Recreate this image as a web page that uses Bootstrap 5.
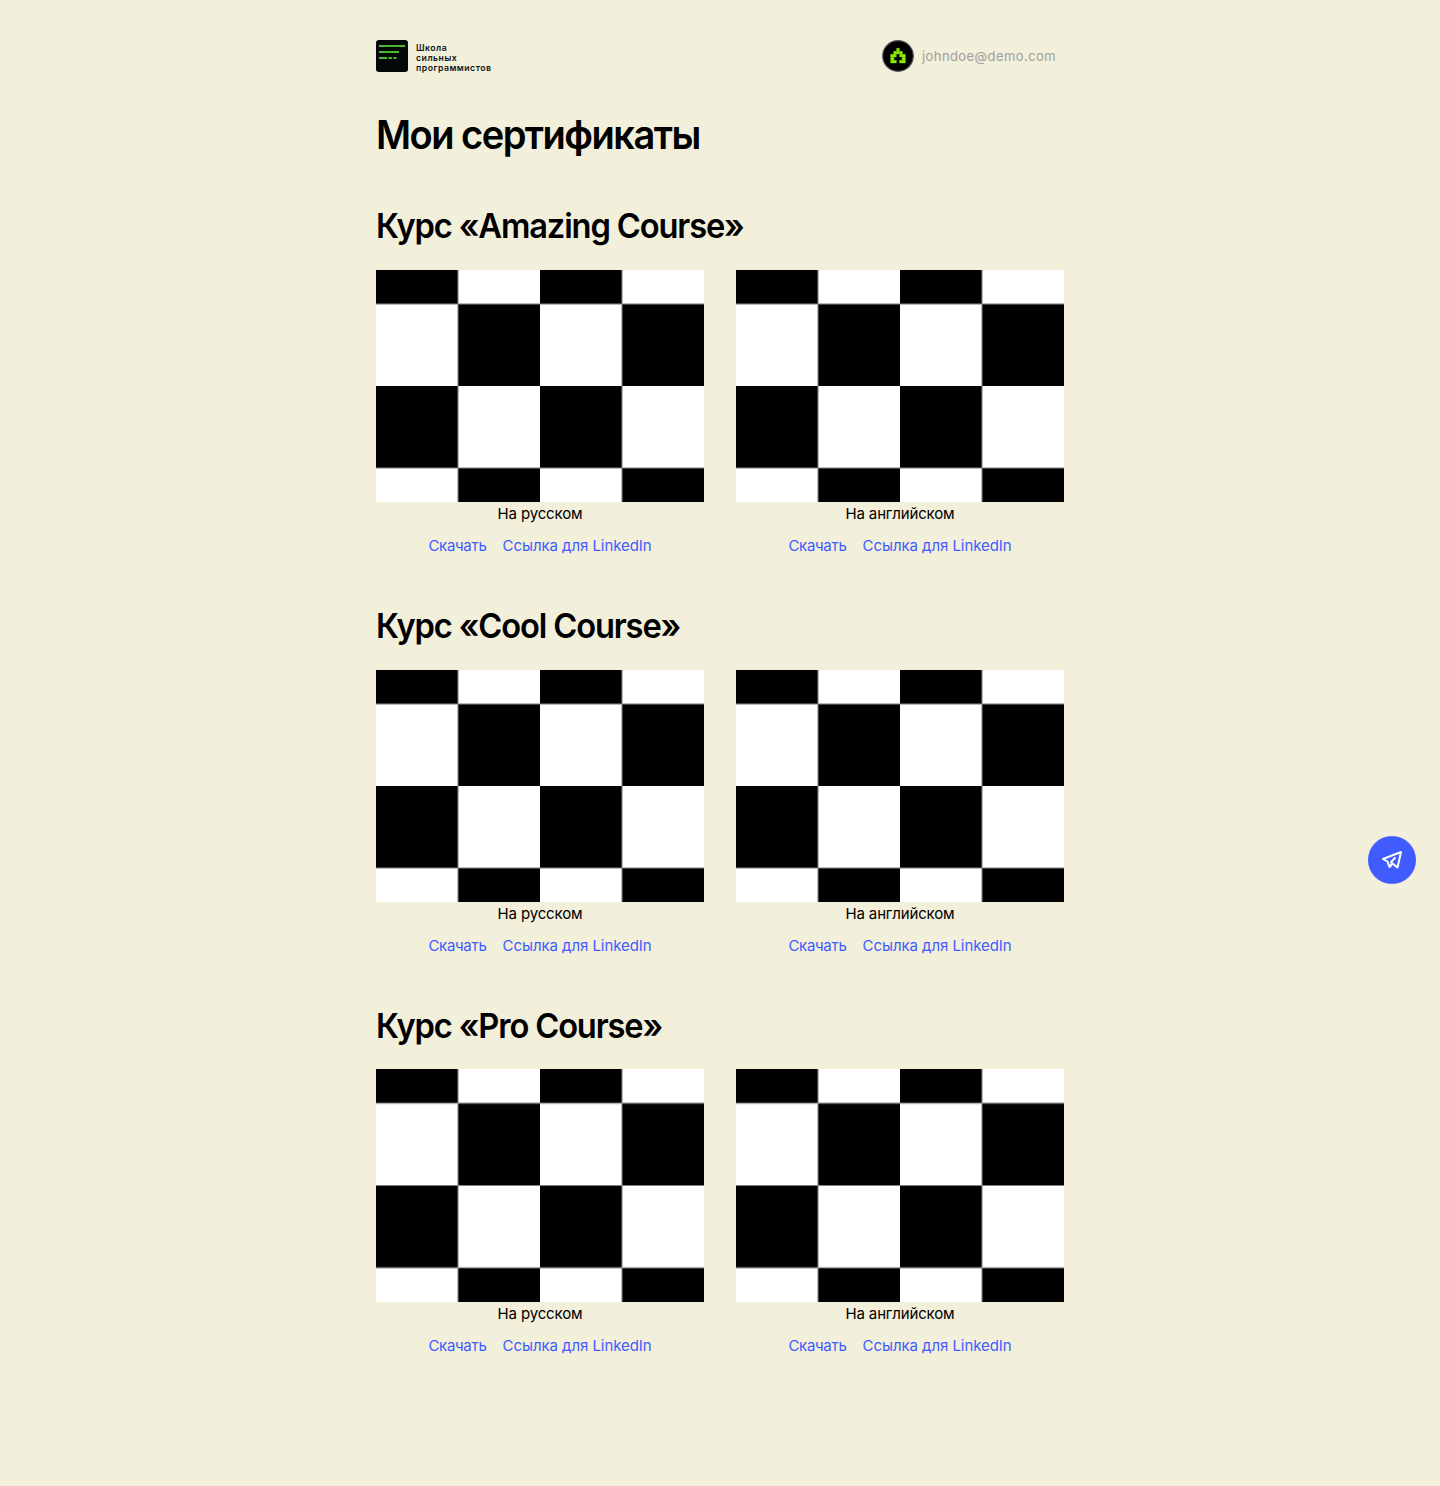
<!DOCTYPE html>
<html lang="ru">
<head>
<meta charset="utf-8">
<meta name="viewport" content="width=device-width, initial-scale=1">
<title>Мои сертификаты</title>
<link href="https://cdn.jsdelivr.net/npm/bootstrap@5.3.0/dist/css/bootstrap.min.css" rel="stylesheet">
<style>
body{background:#f2efdb;color:#000;font-family:Inter,"Noto Sans",sans-serif;font-size:15px;line-height:24px;min-height:1486px}
.page-wrap{width:688px}
.brand-link{height:32px}
.brand-name{font:600 8.7px/10px Inter,sans-serif;letter-spacing:.5px;padding-top:3px;color:#111}
.user-mail{font-size:13px;color:#a09f98;letter-spacing:.42px}
h1,h2{transform-origin:0 50%;font-weight:600}
h1{font-size:40px;line-height:48px;letter-spacing:-1.6px;margin:39px 0 0;transform:scaleX(.951)}
h2{font-size:34px;line-height:40px;letter-spacing:-1.2px;margin:0 0 24px;transform:scaleX(.961)}
.course{height:400px}
.courses{padding-top:47px}
.cert-pic{display:block;width:328px;height:232px}
.course:last-child h2{margin-bottom:23px}
.course:last-child .cert-pic{height:233px}
.cert-name{letter-spacing:-.15px}
.cert-links{margin-top:8px;gap:16px;letter-spacing:-.12px}
.cert-links a{color:#405cff;text-decoration:none}
.cert-links a:first-child{letter-spacing:-.3px}
.cert-links a:last-child{letter-spacing:-.06px}
.chat-btn{width:48px;height:48px;right:24px;top:836px;background:#405cff}
</style>
</head>
<body>
<svg width="0" height="0" class="position-absolute" aria-hidden="true">
<symbol id="board" viewBox="0 0 328 232" preserveAspectRatio="none">
<path fill="#fff" d="M0 0H328V232H0z"/>
<path d="M0 0H82V34H0zM164 0h82v34h-82zM82 34h82v82H82zM246 34h82v82h-82zM0 116h82v82H0zM164 116h82v82h-82zM82 198h82v34H82zM246 198h82v34h-82z"/>
<g stroke="#444"><path d="M81.500 0V34M82.500 34V116M81.500 116V198M82.500 198V232M245.500 0V34M246.500 34V116M245.500 116V198M246.500 198V232"/><path d="M0 33.500H82M82 34.500H164M164 33.500H246M246 34.500H328M0 197.500H82M82 198.500H164M164 197.500H246M246 198.500H328"/></g>
<g stroke="#bbb"><path d="M82.500 0V34M81.500 34V116M82.500 116V198M81.500 198V232M246.500 0V34M245.500 34V116M246.500 116V198M245.500 198V232"/><path d="M0 34.500H82M82 33.500H164M164 34.500H246M246 33.500H328M0 198.500H82M82 197.500H164M164 198.500H246M246 197.500H328"/></g>
</symbol>
</svg>
<div class="page-wrap mx-auto">
<header class="d-flex justify-content-between pt-4 mt-3 pe-2">
<a class="brand-link d-flex gap-2 text-decoration-none" href="#">
<svg width="32" height="32" viewBox="0 0 32 32"><rect width="32" height="32" rx="3" fill="#020807"/><path d="M3 6H29M3 12H23M3 18H11M12.300 18H16M17.300 18H20.500" stroke="#4bb934" stroke-width="1.800"/></svg>
<span class="brand-name">Школа<br>сильных<br>программистов</span>
</a>
<div class="d-flex align-items-center gap-2">
<svg width="32" height="32" viewBox="0 0 32 32"><circle cx="16" cy="16" r="15.300" fill="#000" stroke="#555" stroke-width="1.200"/><path fill="#8cf000" stroke="#8cf000" stroke-width=".3" d="M14.600 8.300h2.800v2.800h-2.800zM11.600 11.300h2.800v2.800h-2.800zM14.600 11.300h2.800v2.800h-2.800zM17.600 11.300h2.800v2.800h-2.800zM8.600 14.300h5.800v2.800H8.600zM17.600 14.300h5.800v2.800h-5.800zM8.600 17.300h3.400v2.800H8.600zM20 17.300h3.400v2.800h-3.400zM8.600 20.300h5.800v2.800H8.600zM17.600 20.300h5.800v2.800h-5.800z"/></svg>
<span class="user-mail">johndoe@demo.com</span>
</div>
</header>
<main>
<h1>Мои сертификаты</h1>
<div class="courses">
<section class="course"><h2>Курс «Amazing Course»</h2>
<div class="d-flex justify-content-between text-center">
<div><svg class="cert-pic"><use href="#board"/></svg><div class="cert-name">На русском</div><div class="cert-links d-flex justify-content-center"><a href="#">Скачать</a><a href="#">Ссылка для LinkedIn</a></div></div>
<div><svg class="cert-pic"><use href="#board"/></svg><div class="cert-name">На английском</div><div class="cert-links d-flex justify-content-center"><a href="#">Скачать</a><a href="#">Ссылка для LinkedIn</a></div></div>
</div></section>
<section class="course"><h2>Курс «Cool Course»</h2>
<div class="d-flex justify-content-between text-center">
<div><svg class="cert-pic"><use href="#board"/></svg><div class="cert-name">На русском</div><div class="cert-links d-flex justify-content-center"><a href="#">Скачать</a><a href="#">Ссылка для LinkedIn</a></div></div>
<div><svg class="cert-pic"><use href="#board"/></svg><div class="cert-name">На английском</div><div class="cert-links d-flex justify-content-center"><a href="#">Скачать</a><a href="#">Ссылка для LinkedIn</a></div></div>
</div></section>
<section class="course"><h2>Курс «Pro Course»</h2>
<div class="d-flex justify-content-between text-center">
<div><svg class="cert-pic"><use href="#board"/></svg><div class="cert-name">На русском</div><div class="cert-links d-flex justify-content-center"><a href="#">Скачать</a><a href="#">Ссылка для LinkedIn</a></div></div>
<div><svg class="cert-pic"><use href="#board"/></svg><div class="cert-name">На английском</div><div class="cert-links d-flex justify-content-center"><a href="#">Скачать</a><a href="#">Ссылка для LinkedIn</a></div></div>
</div></section>
</div>
</main>
</div>
<a class="chat-btn position-fixed rounded-circle d-flex align-items-center justify-content-center" href="#" aria-label="Telegram">
<svg width="24" height="24" viewBox="0 0 24 24" fill="none" stroke="#fff" stroke-width="2" stroke-linejoin="round" stroke-linecap="round"><path d="M21 4 3 11l4.500 2.500L9.500 19l3-3.500L17.500 19.500zM15 10l-4 4 1.500 1.500"/></svg>
</a>
<script src="https://cdn.jsdelivr.net/npm/bootstrap@5.3.0/dist/js/bootstrap.bundle.min.js"></script>
</body>
</html>
